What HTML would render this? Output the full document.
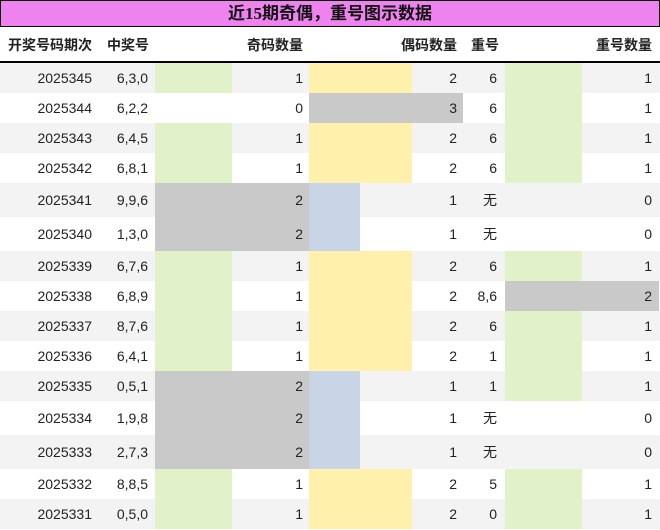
<!DOCTYPE html>
<html><head><meta charset="utf-8"><style>
*{margin:0;padding:0;box-sizing:border-box}
body{width:660px;height:530px;background:#fff;position:relative;overflow:hidden;font-family:"Liberation Sans","Noto Sans CJK SC",sans-serif;color:#222;font-size:14px}
.t{position:absolute;left:0;top:0;width:660px;height:27px;background:#ee82ee;border:1px solid #000;text-align:center;font:bold 17px/25px "Liberation Serif","Noto Sans CJK SC",serif;color:#111}
.h{position:absolute;top:27px;left:0;width:660px;height:36px;border-bottom:2px solid #000;font-weight:bold}
.h span,.r span{position:absolute;white-space:nowrap}
.h span{top:0;line-height:36px}
.r{position:absolute;left:0;width:660px}
.r i{position:absolute;top:0;bottom:0}
.g{background:#e2f2c8}.y{background:#fff0ab}.k{background:#c9c9c9}.b{background:#c9d5e6}
.a{right:568px}.c{right:512px}.d{right:357px}.e{right:203px}.f{right:163px}.z{right:8px}
</style></head><body>
<div class="t">近15期奇偶，重号图示数据</div>
<div class="h"><span style="left:8px">开奖号码期次</span><span style="left:107px">中奖号</span><span class="d">奇码数量</span><span class="e">偶码数量</span><span style="left:471px">重号</span><span class="z">重号数量</span></div>

<div class="r" style="top:63px;height:30px;line-height:30px;background:#f3f3f3"><i class="g" style="left:155px;width:77px"></i><i class="y" style="left:309px;width:103px"></i><i class="g" style="left:505px;width:77px"></i><span class="a">2025345</span><span class="c">6,3,0</span><span class="d">1</span><span class="e">2</span><span class="f">6</span><span class="z">1</span></div>
<div class="r" style="top:93px;height:30px;line-height:30px"><i class="k" style="left:309px;width:154px"></i><i class="g" style="left:505px;width:77px"></i><span class="a">2025344</span><span class="c">6,2,2</span><span class="d">0</span><span class="e">3</span><span class="f">6</span><span class="z">1</span></div>
<div class="r" style="top:123px;height:30px;line-height:30px;background:#f3f3f3"><i class="g" style="left:155px;width:77px"></i><i class="y" style="left:309px;width:103px"></i><i class="g" style="left:505px;width:77px"></i><span class="a">2025343</span><span class="c">6,4,5</span><span class="d">1</span><span class="e">2</span><span class="f">6</span><span class="z">1</span></div>
<div class="r" style="top:153px;height:30px;line-height:30px"><i class="g" style="left:155px;width:77px"></i><i class="y" style="left:309px;width:103px"></i><i class="g" style="left:505px;width:77px"></i><span class="a">2025342</span><span class="c">6,8,1</span><span class="d">1</span><span class="e">2</span><span class="f">6</span><span class="z">1</span></div>
<div class="r" style="top:183px;height:34px;line-height:34px;background:#f3f3f3"><i class="k" style="left:155px;width:154px"></i><i class="b" style="left:309px;width:51px"></i><span class="a">2025341</span><span class="c">9,9,6</span><span class="d">2</span><span class="e">1</span><span class="f">无</span><span class="z">0</span></div>
<div class="r" style="top:217px;height:34px;line-height:34px"><i class="k" style="left:155px;width:154px"></i><i class="b" style="left:309px;width:51px"></i><span class="a">2025340</span><span class="c">1,3,0</span><span class="d">2</span><span class="e">1</span><span class="f">无</span><span class="z">0</span></div>
<div class="r" style="top:251px;height:30px;line-height:30px;background:#f3f3f3"><i class="g" style="left:155px;width:77px"></i><i class="y" style="left:309px;width:103px"></i><i class="g" style="left:505px;width:77px"></i><span class="a">2025339</span><span class="c">6,7,6</span><span class="d">1</span><span class="e">2</span><span class="f">6</span><span class="z">1</span></div>
<div class="r" style="top:281px;height:30px;line-height:30px"><i class="g" style="left:155px;width:77px"></i><i class="y" style="left:309px;width:103px"></i><i class="k" style="left:505px;width:154px"></i><span class="a">2025338</span><span class="c">6,8,9</span><span class="d">1</span><span class="e">2</span><span class="f">8,6</span><span class="z">2</span></div>
<div class="r" style="top:311px;height:30px;line-height:30px;background:#f3f3f3"><i class="g" style="left:155px;width:77px"></i><i class="y" style="left:309px;width:103px"></i><i class="g" style="left:505px;width:77px"></i><span class="a">2025337</span><span class="c">8,7,6</span><span class="d">1</span><span class="e">2</span><span class="f">6</span><span class="z">1</span></div>
<div class="r" style="top:341px;height:30px;line-height:30px"><i class="g" style="left:155px;width:77px"></i><i class="y" style="left:309px;width:103px"></i><i class="g" style="left:505px;width:77px"></i><span class="a">2025336</span><span class="c">6,4,1</span><span class="d">1</span><span class="e">2</span><span class="f">1</span><span class="z">1</span></div>
<div class="r" style="top:371px;height:30px;line-height:30px;background:#f3f3f3"><i class="k" style="left:155px;width:154px"></i><i class="b" style="left:309px;width:51px"></i><i class="g" style="left:505px;width:77px"></i><span class="a">2025335</span><span class="c">0,5,1</span><span class="d">2</span><span class="e">1</span><span class="f">1</span><span class="z">1</span></div>
<div class="r" style="top:401px;height:34px;line-height:34px"><i class="k" style="left:155px;width:154px"></i><i class="b" style="left:309px;width:51px"></i><span class="a">2025334</span><span class="c">1,9,8</span><span class="d">2</span><span class="e">1</span><span class="f">无</span><span class="z">0</span></div>
<div class="r" style="top:435px;height:34px;line-height:34px;background:#f3f3f3"><i class="k" style="left:155px;width:154px"></i><i class="b" style="left:309px;width:51px"></i><span class="a">2025333</span><span class="c">2,7,3</span><span class="d">2</span><span class="e">1</span><span class="f">无</span><span class="z">0</span></div>
<div class="r" style="top:469px;height:30px;line-height:30px"><i class="g" style="left:155px;width:77px"></i><i class="y" style="left:309px;width:103px"></i><i class="g" style="left:505px;width:77px"></i><span class="a">2025332</span><span class="c">8,8,5</span><span class="d">1</span><span class="e">2</span><span class="f">5</span><span class="z">1</span></div>
<div class="r" style="top:499px;height:30px;line-height:30px;background:#f3f3f3"><i class="g" style="left:155px;width:77px"></i><i class="y" style="left:309px;width:103px"></i><i class="g" style="left:505px;width:77px"></i><span class="a">2025331</span><span class="c">0,5,0</span><span class="d">1</span><span class="e">2</span><span class="f">0</span><span class="z">1</span></div>
</body></html>
